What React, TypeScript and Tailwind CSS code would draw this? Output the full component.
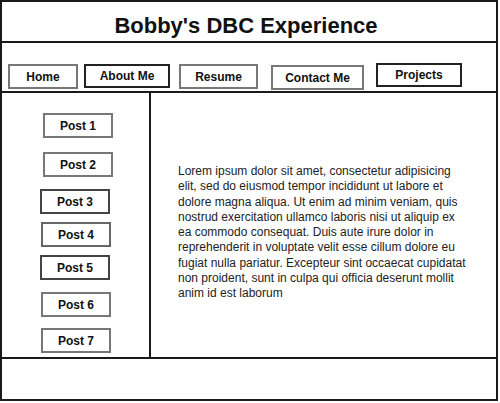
const navItems = [
  { label: 'Home', cls: 'ml-[6px] mt-[21px] w-[70px] h-[25px] border-[#777]' },
  { label: 'About Me', cls: 'ml-[6px] mt-[21px] w-[86px] h-[24px] border-[#222]' },
  { label: 'Resume', cls: 'ml-[9px] mt-[21px] w-[79px] h-[25px] border-[#777]' },
  { label: 'Contact Me', cls: 'ml-[13px] mt-[22px] w-[93px] h-[25px] border-[#777]' },
  { label: 'Projects', cls: 'ml-[12px] mt-[20px] w-[86px] h-[24px] border-[#222]' },
]

const posts = [
  { label: 'Post 1', cls: 'ml-[41px] mt-[20px] border-[#777]' },
  { label: 'Post 2', cls: 'ml-[41px] mt-[14px] border-[#777]' },
  { label: 'Post 3', cls: 'ml-[38px] mt-[12px] border-[#444]' },
  { label: 'Post 4', cls: 'ml-[39px] mt-[8px] border-[#666]' },
  { label: 'Post 5', cls: 'ml-[38px] mt-[8px] border-[#444]' },
  { label: 'Post 6', cls: 'ml-[39px] mt-[12px] border-[#777]' },
  { label: 'Post 7', cls: 'ml-[39px] mt-[11px] border-[#777]' },
]

const loremLines = [
  'Lorem ipsum dolor sit amet, consectetur adipisicing',
  'elit, sed do eiusmod tempor incididunt ut labore et',
  'dolore magna aliqua. Ut enim ad minim veniam, quis',
  'nostrud exercitation ullamco laboris nisi ut aliquip ex',
  'ea commodo consequat. Duis aute irure dolor in',
  'reprehenderit in voluptate velit esse cillum dolore eu',
  'fugiat nulla pariatur. Excepteur sint occaecat cupidatat',
  'non proident, sunt in culpa qui officia deserunt mollit',
  'anim id est laborum',
]

export default function App() {
  return (
    <div className="w-[500px] h-[403px] bg-white font-['Liberation_Sans',Arial,sans-serif] text-[#111]">
      <div className="w-[498px] h-[401px] border-2 border-[#1a1a1a] flex flex-col">
        {/* Title */}
        <header className="h-[41px] flex items-center justify-center border-b-2 border-[#1a1a1a] shrink-0">
          <h1 className="text-[22px] font-bold leading-none mt-[9px] ml-[-6px]">Bobby's DBC Experience</h1>
        </header>

        {/* Nav */}
        <nav className="h-[50px] flex items-start border-b-2 border-[#1a1a1a] shrink-0">
          {navItems.map((item) => (
            <div
              key={item.label}
              className={`flex items-center justify-center border-2 text-[12px] font-bold shrink-0 ${item.cls}`}
            >
              {item.label}
            </div>
          ))}
        </nav>

        {/* Body */}
        <div className="h-[266px] flex border-b-2 border-[#1a1a1a] shrink-0">
          <aside className="w-[149px] border-r-2 border-[#1a1a1a] flex flex-col shrink-0">
            {posts.map((post) => (
              <div
                key={post.label}
                className={`w-[70px] h-[25px] flex items-center justify-center border-2 text-[12px] font-bold ${post.cls}`}
              >
                {post.label}
              </div>
            ))}
          </aside>
          <main className="flex-1 pl-[27px] pt-[71px]">
            <div className="w-[291px] overflow-hidden text-[12px] leading-[15.3px] text-[#222]">
              {loremLines.map((line) => (
                <div key={line} className="whitespace-nowrap">
                  {line}
                </div>
              ))}
            </div>
          </main>
        </div>

        {/* Footer */}
        <footer className="flex-1" />
      </div>
    </div>
  )
}
